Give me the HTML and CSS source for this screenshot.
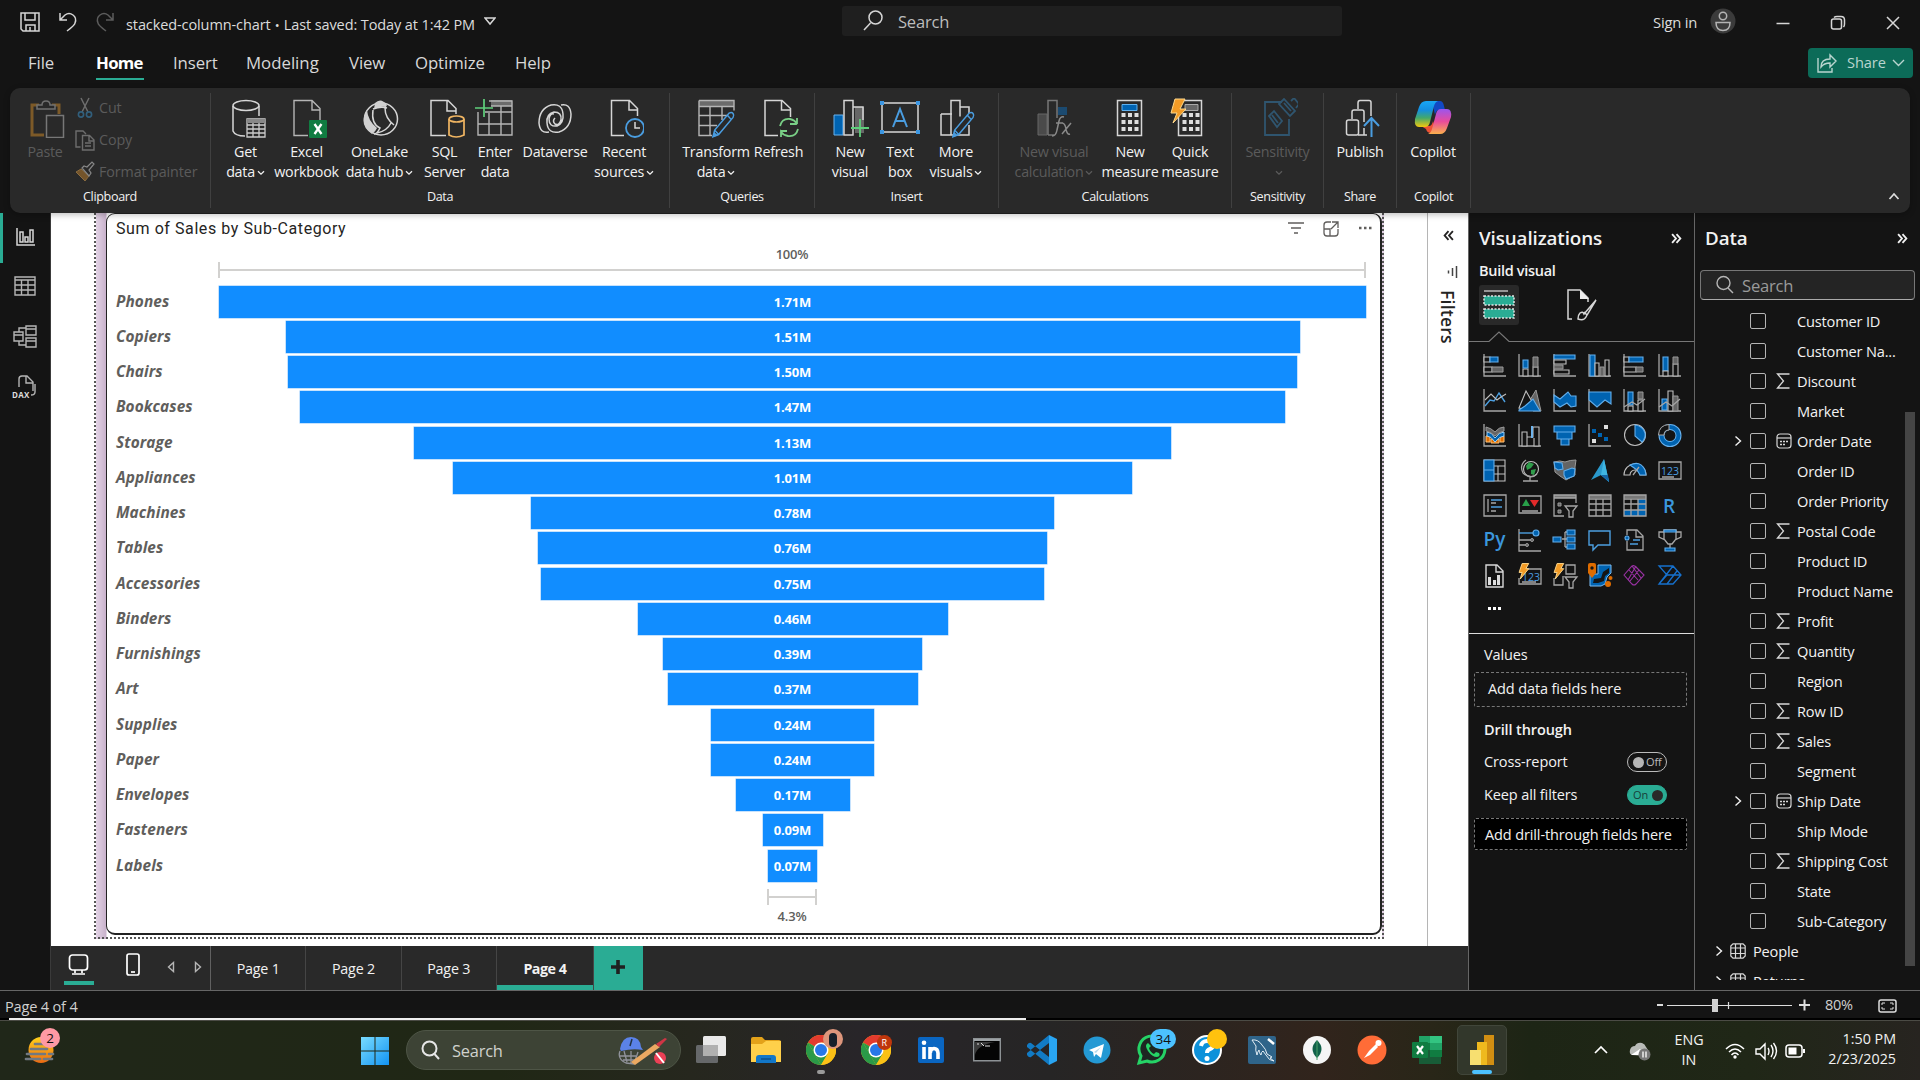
FILE: index.html
```html
<!DOCTYPE html>
<html lang="en">
<head>
<meta charset="utf-8">
<title>stacked-column-chart</title>
<link rel="stylesheet" href="styles.css">
</head>
<body>
<svg class="defs" width="0" height="0">
  <symbol id="chev" viewBox="0 0 8 6"><path d="M1 1.2l3 3 3-3" fill="none" stroke="currentColor" stroke-width="1.3"/></symbol>
  <symbol id="right" viewBox="0 0 8 12"><path d="M1.5 1.5L6.5 6l-5 4.500" fill="none" stroke="currentColor" stroke-width="1.4"/></symbol>
  <symbol id="dbl" viewBox="0 0 10 10"><path d="M1 1l3.500 4L1 9M5 1l3.500 4L5 9" fill="none" stroke="currentColor" stroke-width="1.7"/></symbol>
  <symbol id="sum" viewBox="0 0 14 16"><path d="M13.500 1H1.500l6 7-6 7h12" fill="none" stroke="#d8d8d8" stroke-width="1.3"/></symbol>
  <symbol id="cal" viewBox="0 0 16 16"><rect x="1" y="1" width="14" height="14" rx="3" fill="none" stroke="#d8d8d8" stroke-width="1.2"/><path d="M1 5h14" stroke="#d8d8d8" stroke-width="1.200"/><path d="M4 8.500h2M7 8.500h2M10 8.500h2M4 11.500h2M7 11.500h2" stroke="#d8d8d8" stroke-width="1.700"/></symbol>
  <symbol id="tbl" viewBox="0 0 16 16"><path d="M3 .8h10l2.200 2.200v10L13 15.200H3L.8 13V3zM5.500 1v14M10.500 1v14M1 5h14M1 10.500h14" fill="none" stroke="#d8d8d8" stroke-width="1.200"/></symbol>
  <symbol id="pencil" viewBox="0 0 26 32"><path d="M1.500 30.500l2-7.500L20 3.500q3-1.500 4.500.5t0 4.500L8 28zM3.500 23L8 28M18 6l4.500 5" fill="#292929" stroke="#4a9de0" stroke-width="1.700"/><path d="M1 31l2-6 4 4z" fill="#4a9de0"/></symbol>
  <symbol id="chrome" viewBox="0 0 30 30"><circle cx="15" cy="15" r="15" fill="#fbc116"/><path d="M15 15L2 7.500a15 15 0 0 1 26 0z" fill="#e33b2e"/><path d="M2 7.500L15 30A15 15 0 0 1 2 7.500z" fill="#2a9a48"/><path d="M2 7.500L8.500 19 15 30l7-11-7-4z" fill="#2a9a48"/><path d="M22 18l-7 12a15 15 0 0 0 13-22.500H15z" fill="#fbc116"/><path d="M15 7.500h13l-5 .8z" fill="#e33b2e"/><circle cx="15" cy="15" r="7.500" fill="#fff"/><circle cx="15" cy="15" r="6" fill="#2878e8"/></symbol>
  <symbol id="bolt" viewBox="0 0 12 18"><path d="M4 .5h7L8 6h3L2 17l2-7H.8z" fill="#f29b26" stroke="#ffd98c"/></symbol>
</svg>

<header class="titlebar">
  <svg class="ic-save" width="22" height="22" viewBox="0 0 22 22"><path class="lt" d="M2 2h18v18H4l-2-2zM6 2v7h10V2M7 20v-6h9v6M11 20v-4"/></svg>
  <svg class="ic-undo" width="20" height="22" viewBox="0 0 20 22"><path class="lt" d="M2 2v7h7M2 9l5-5q4-3 8 0t2 8q0 2-8 8"/></svg>
  <svg class="ic-redo" width="20" height="22" viewBox="0 0 20 22"><path class="dim" d="M18 2v7h-7M18 9l-5-5Q9 1 5 4t-2 8q0 2 8 8"/></svg>
  <span class="filename">stacked-column-chart <i>•</i> Last saved: Today at 1:42 PM</span>
  <svg class="ic-drop" width="12" height="9" viewBox="0 0 12 9"><path class="lt" d="M1 1h10L6 7z"/></svg>
  <div class="topsearch"><svg width="22" height="22" viewBox="0 0 22 22"><path class="lt" d="M2 20l6.500-7"/><circle class="lt" cx="13.500" cy="7.500" r="6.500"/></svg><span>Search</span></div>
  <span class="signin">Sign in</span>
  <svg class="avatar" width="26" height="26" viewBox="0 0 26 26"><circle cx="13" cy="13" r="12.500" fill="#3b3b3b"/><circle class="av" cx="13" cy="8" r="3.700"/><path class="av" d="M6 14.500h14q0 8-7 8t-7-8z"/></svg>
  <div class="winctl">
    <svg width="16" height="16" viewBox="0 0 16 16"><path class="lt" d="M1.500 8.500h13"/></svg>
    <svg width="16" height="16" viewBox="0 0 16 16"><rect class="lt" x="1.500" y="4" width="10" height="10" rx="2"/><path class="lt" d="M4 2.500q1-1 3-1h4q3.500 0 3.500 3.500v4q0 2-1 3"/></svg>
    <svg width="16" height="16" viewBox="0 0 16 16"><path class="lt" d="M2 2l12 12M14 2L2 14"/></svg>
  </div>
</header>

<nav class="menubar">
  <span class="m-file">File</span><span class="m-home active">Home</span><span class="m-insert">Insert</span><span class="m-model">Modeling</span><span class="m-view">View</span><span class="m-opt">Optimize</span><span class="m-help">Help</span>
  <div class="share"><svg width="20" height="20" viewBox="0 0 20 20"><path d="M1 5v14h14v-4M4 14q0-8 9-8V2l6 6-6 6v-4q-6 0-9 4z" fill="none" stroke="#b9d5cf" stroke-width="1.400"/></svg><span>Share</span><svg width="13" height="8" viewBox="0 0 13 8"><path d="M1 1l5.500 5.500L12 1" fill="none" stroke="#b9d5cf" stroke-width="1.400"/></svg></div>
</nav>

<section class="ribbon">
  <div class="group g-clip">
    <div class="tools">
      <div class="btn off b-paste"><svg width="40" height="40" viewBox="0 0 40 40"><path d="M14 7H7v30h12M27 7h7v9" fill="none" stroke="#7d5a28" stroke-width="3"/><path d="M12 11V7h5q0-4 4-4t4 4h5v4z" fill="#292929" stroke="#707070" stroke-width="1.500"/><path d="M21.500 17.500h17v22h-17z" fill="#292929" stroke="#777" stroke-width="1.500"/></svg><span>Paste</span></div>
      <div class="cliplist off">
        <div><svg width="20" height="22" viewBox="0 0 20 22"><path d="M6 1l7 14M14 1L7 15" stroke="#6d6d6d" stroke-width="1.500"/><circle cx="6" cy="17.500" r="2.600" fill="none" stroke="#315f7c" stroke-width="1.600"/><circle cx="14" cy="17.500" r="2.600" fill="none" stroke="#315f7c" stroke-width="1.600"/></svg>Cut</div>
        <div><svg width="20" height="22" viewBox="0 0 20 22"><path d="M5.500 18H1V2h7l3 3M7.500 6.500h7l4.500 4.500v10H7.500zM14 7v5h5M10 14h6M10 17h6" fill="none" stroke="#6d6d6d" stroke-width="1.400"/></svg>Copy</div>
        <div><svg width="20" height="22" viewBox="0 0 20 22"><path d="M1 11l9 9 4-5-8-7z" fill="#74542a" stroke="#8a6c40"/><path d="M7 7l7 8 2-3-2-3 5-6-2-2-5 5-3-1z" fill="#292929" stroke="#888" stroke-width="1.200"/></svg>Format painter</div>
      </div>
    </div>
    <div class="glabel">Clipboard</div>
  </div>

  <div class="group g-data">
    <div class="tools">
      <div class="btn w53"><svg width="40" height="40" viewBox="0 0 40 40"><ellipse class="lt" cx="20" cy="7.500" rx="13" ry="5"/><path class="lt" d="M7 8v25q2 5 12 5M33 8v10"/><path d="M20 20h20v20H20z" fill="#292929"/><path d="M21 21h18v18H21zM21 27h18M21 31h18M21 35h18M27 25v14M33 25v14" fill="none" stroke="#ccc" stroke-width="1.300"/><path d="M21 21h18v4H21z" fill="#888"/></svg><span>Get<br>data<svg class="cv"><use href="#chev"/></svg></span></div>
      <div class="btn w69"><svg width="40" height="40" viewBox="0 0 40 40"><path class="gr" d="M21 37.500H7v-35h18l8 8V22M25 3v9h8"/><rect x="22" y="22" width="18" height="18" rx="1" fill="#107c41"/><path d="M27.500 26l7 10M34.500 26l-7 10" stroke="#fff" stroke-width="2.300"/></svg><span>Excel<br>workbook</span></div>
      <div class="btn w77"><svg width="40" height="40" viewBox="0 0 40 40"><ellipse class="lt" cx="21" cy="21" rx="16.500" ry="16"/><path d="M7 12q-9 15 5 24 4-3 5-6Q8 23 7 12M15 5q6-6 12 2l-1 2q-6-1-12 2z" fill="#d0d0d0"/><path d="M13 14q3-3 9-3 3 11 8 15-4 6-9 5-8-6-8-17z" fill="#292929"/><path class="lt" d="M13 11q8-3 14-1M25 10q0 10 9 17M13 12q-2 14 7 18-3 6-6 6M17 35q10-2 14-10"/></svg><span>OneLake<br>data hub<svg class="cv"><use href="#chev"/></svg></span></div>
      <div class="btn w53"><svg width="40" height="40" viewBox="0 0 40 40"><path class="lt" d="M21 37.500H6v-35h17l8 8V16M22 3v10h9"/><path d="M24 21v16q7 4 15 0V21" fill="#292929" stroke="#f0b562" stroke-width="1.700"/><ellipse cx="31.500" cy="21" rx="7.500" ry="3" fill="#292929" stroke="#f0b562" stroke-width="1.700"/></svg><span>SQL<br>Server</span></div>
      <div class="btn w48"><svg width="40" height="40" viewBox="0 0 40 40"><path d="M16 2h21v6H16z" fill="#6b6b6b"/><path class="gr" d="M14 3h23v34H3V14M10 14h27M3 26h34M14 15v22M26 8v29M16 8h21"/><path d="M9 1v18M0 10h18" stroke="#5fd07b" stroke-width="1.700"/></svg><span>Enter<br>data</span></div>
      <div class="btn w72"><svg width="40" height="40" viewBox="0 0 40 40"><path class="lt" d="M26 7q9-2 10 9 0 14-12 18-11 2-12-9-1-9 7-11 8 0 7 8-2 6-6 4-3-3 0-6M14 34q-9 2-10-9Q4 11 16 7q11-2 12 9 1 9-6 12-8 1-8-7 1-6 5-5"/></svg><span>Dataverse</span></div>
      <div class="btn w66"><svg width="40" height="40" viewBox="0 0 40 40"><path class="lt" d="M20 37.500H7.500v-35h18l8 8V18M25 3v9h8"/><circle cx="31" cy="30" r="9" fill="#292929" stroke="#4a9de0" stroke-width="1.800"/><path class="lt" d="M31 24v6h5"/></svg><span>Recent<br>sources<svg class="cv"><use href="#chev"/></svg></span></div>
    </div>
    <div class="glabel">Data</div>
  </div>

  <div class="group g-query">
    <div class="tools">
      <div class="btn w68"><svg width="40" height="40" viewBox="0 0 40 40"><path d="M3 3h35v5H3z" fill="#6b6b6b"/><path class="gr" d="M3 2.500h35v10M3 2.500v35h13M3 8.500h35M3 17.500h28M3 27.500h18M14 8v29M26 8v14"/><use href="#pencil" x="14" y="12" width="26" height="28"/></svg><span>Transform<br>data<svg class="cv"><use href="#chev"/></svg></span></div>
      <div class="btn w57"><svg width="40" height="40" viewBox="0 0 40 40"><path class="lt" d="M19 37.500H6v-35h17l8.500 8V19M22.500 3v9h9"/><path d="M21 28q2-8 10-7 5 1 7 5V20M38 26h-7M39 31q-2 8-10 7-5-1-7-4v5M22 33h6" fill="none" stroke="#79cf86" stroke-width="1.800"/></svg><span>Refresh</span></div>
    </div>
    <div class="glabel">Queries</div>
  </div>

  <div class="group g-insert">
    <div class="tools">
      <div class="btn w50"><svg width="40" height="40" viewBox="0 0 40 40"><path d="M25 9h9v26h-9z" fill="#666"/><path d="M4 17h9v20H4z" fill="#0063b1" stroke="#69b3ee"/><path class="lt" d="M14 37V2.500h9V37zM23 9h10v13"/><path d="M30 21v18M21 30h18" stroke="#5fd07b" stroke-width="1.800"/></svg><span>New<br>visual</span></div>
      <div class="btn w50"><svg width="40" height="40" viewBox="0 0 40 40"><path class="lt" d="M2 5h36v29H2z"/><path d="M0 3h4v4H0zM36 3h4v4h-4zM0 32h4v4H0zM36 32h4v4h-4z" fill="#3b96e2"/><path d="M13 29l7-18 7 18M15.500 23h9" fill="none" stroke="#4a9de0" stroke-width="2"/></svg><span>Text<br>box</span></div>
      <div class="btn w62"><svg width="40" height="40" viewBox="0 0 40 40"><path class="lt" d="M5 16h11M5 16v21h28V27M15 37V2.500h9v16M24 9h9v7"/><use href="#pencil" x="14" y="12" width="26" height="28"/></svg><span>More<br>visuals<svg class="cv"><use href="#chev"/></svg></span></div>
    </div>
    <div class="glabel">Insert</div>
  </div>

  <div class="group g-calc">
    <div class="tools">
      <div class="btn off w94"><svg width="40" height="40" viewBox="0 0 40 40"><path d="M4 16h9v21H4z" fill="#4a4a4a" stroke="#666"/><path d="M24 9h9v8h-9z" fill="#1b4a70"/><path d="M14 37V2.500h9V20M14 37h6" fill="none" stroke="#777" stroke-width="1.500"/><path d="M18 38q4 0 5-6l2-9q1-5 5-4M22 25h7M28 25q3 0 4 6t4 5M37 25l-9 11" fill="none" stroke="#8a8a8a" stroke-width="1.500"/></svg><span>New visual<br>calculation<svg class="cv"><use href="#chev"/></svg></span></div>
      <div class="btn w58"><svg width="40" height="40" viewBox="0 0 40 40"><path class="lt" d="M7.500 2.500h24v35h-24z"/><path d="M12 6.500h15v6H12z" fill="#0063b1" stroke="#5fb0ee"/><path d="M11.500 17h17M11.500 24h17M11.500 31h17" stroke="#ddd" stroke-width="4" stroke-dasharray="4 2.500"/></svg><span>New<br>measure</span></div>
      <div class="btn w62"><svg width="40" height="40" viewBox="0 0 40 40"><path class="lt" d="M8.500 2.500h23v35h-23z"/><path d="M15 6.500h13v6H15z" fill="#666" stroke="#aaa"/><path d="M12.500 17h17M12.500 24h17M12.500 31h17" stroke="#ddd" stroke-width="4" stroke-dasharray="4 2.500"/><path d="M5 1h10l-5 10h6L3 25l4-10H1z" fill="#f29b26" stroke="#ffd98c"/></svg><span>Quick<br>measure</span></div>
    </div>
    <div class="glabel">Calculations</div>
  </div>

  <div class="group g-sens">
    <div class="tools"><div class="btn off w91"><svg width="40" height="40" viewBox="0 0 40 40"><path d="M24 4H7v33h24V21M11 18l5-5 8 10-5 6zM14 17l6 8M21 6l5-5 11 12-5 5zM26 5l7 8M33 3l3-3 5 6-3 4" fill="none" stroke="#2f556f" stroke-width="1.800"/></svg><span>Sensitivity<br><svg class="cv"><use href="#chev"/></svg></span></div></div>
    <div class="glabel">Sensitivity</div>
  </div>
  <div class="group g-share">
    <div class="tools"><div class="btn w72"><svg width="40" height="40" viewBox="0 0 40 40"><rect class="lt" x="6.500" y="22" width="12" height="15" rx="2"/><path class="lt" d="M12 21v-7q0-2 2-2h8q2 0 2 2v10M18 11V5q0-2.500 2-2.500h9q2 0 2 2V18M18 37h9M24 30v7"/><path d="M31.500 39V21M24 28l7.500-8 7.500 8" fill="none" stroke="#4a9de0" stroke-width="2"/></svg><span>Publish</span></div></div>
    <div class="glabel">Share</div>
  </div>
  <div class="group g-copilot">
    <div class="tools"><div class="btn w72"><svg width="40" height="40" viewBox="0 0 40 40">
      <defs><linearGradient id="ca" x2="0" y2="1"><stop stop-color="#18a7f5"/><stop offset=".35" stop-color="#148ee0"/><stop offset=".65" stop-color="#43a86b"/><stop offset="1" stop-color="#f4c80d"/></linearGradient><linearGradient id="cb" x2="0" y2="1"><stop stop-color="#9b55ee"/><stop offset=".5" stop-color="#e94b9b"/><stop offset="1" stop-color="#fbb04c"/></linearGradient></defs>
      <path d="M19 3h8q3 0 4 5l1 4h-6q-3 0-4 5z" fill="#1248c4"/><path d="M8 28h8q3 0 4-5l4 12h-6q-4 0-5-4z" fill="#ee5134"/><path d="M13 3h12q-3 1-4 5l-4 16q-1 5-5 5H6q-5 0-4-8l4-12q2-6 7-6z" fill="url(#ca)"/><path d="M27 36H15q3-1 4-5l4-15q1-5 5-5h6q5 0 4 8l-4 11q-2 6-7 6z" fill="url(#cb)"/></svg><span>Copilot</span></div></div>
    <div class="glabel">Copilot</div>
  </div>
  <svg class="collapse" width="12" height="8" viewBox="0 0 12 8"><path d="M1.500 7L6 2l4.500 5" fill="none" stroke="#ddd" stroke-width="1.700"/></svg>
</section>

<main class="work">
  <aside class="rail">
    <div class="railbtn on"><svg width="24" height="24" viewBox="0 0 24 24"><path class="lt" d="M3 3v17h18M6 7h3v10H6zM11 12h3v5h-3zM16 5h3v12h-3z"/></svg></div>
    <div class="railbtn"><svg width="24" height="24" viewBox="0 0 24 24"><path class="gr" d="M2 3h20v18H2zM2 6h20M2 11h20M2 16h20M8.500 6v15M15 6v15"/></svg></div>
    <div class="railbtn"><svg width="26" height="26" viewBox="0 0 26 26"><path class="gr" d="M2 9h9v9H2zM2 12h9M14 3h10v9H14zM14 6h10M14 15h10v9H14zM14 18h10M7 9V5h7M7 18v4h7"/></svg></div>
    <div class="railbtn"><svg width="26" height="26" viewBox="0 0 26 26"><path class="gr" d="M7 14V6q0-3 3-3h5l6 6v9M14 3v7h7M23 11v8q0 3-4 3"/></svg><b>DAX</b></div>
  </aside>

  <div class="center">
    <div class="stage">
      <div class="canvas">
        <div class="page">
          <article class="visual">
            <div class="vhead"><h2>Sum of Sales by Sub-Category</h2>
              <svg width="88" height="20" viewBox="0 0 88 20"><path d="M1 4h16M4 9h10M7 14h4M44 3h-4q-3 0-3 3v8q0 3 3 3h8q3 0 3-3v-4M45 3h6v6M51 3l-7 7M37 10h6v7" fill="none" stroke="#605e5c" stroke-width="1.300"/><path d="M72 9h2.500M77 9h2.500M82 9h2.500" stroke="#605e5c" stroke-width="2.500"/></svg></div>
            <div class="pct">100%</div>
            <div class="bracket" style="width:1148px"></div>
            <div class="funnel">
              <div class="frow"><em>Phones</em><div class="bar" style="width:1147px">1.71M</div></div>
              <div class="frow"><em>Copiers</em><div class="bar" style="width:1014px">1.51M</div></div>
              <div class="frow"><em>Chairs</em><div class="bar" style="width:1009px">1.50M</div></div>
              <div class="frow"><em>Bookcases</em><div class="bar" style="width:985px">1.47M</div></div>
              <div class="frow"><em>Storage</em><div class="bar" style="width:757px">1.13M</div></div>
              <div class="frow"><em>Appliances</em><div class="bar" style="width:679px">1.01M</div></div>
              <div class="frow"><em>Machines</em><div class="bar" style="width:523px">0.78M</div></div>
              <div class="frow"><em>Tables</em><div class="bar" style="width:509px">0.76M</div></div>
              <div class="frow"><em>Accessories</em><div class="bar" style="width:503px">0.75M</div></div>
              <div class="frow"><em>Binders</em><div class="bar" style="width:310px">0.46M</div></div>
              <div class="frow"><em>Furnishings</em><div class="bar" style="width:259px">0.39M</div></div>
              <div class="frow"><em>Art</em><div class="bar" style="width:250px">0.37M</div></div>
              <div class="frow"><em>Supplies</em><div class="bar" style="width:163px">0.24M</div></div>
              <div class="frow"><em>Paper</em><div class="bar" style="width:163px">0.24M</div></div>
              <div class="frow"><em>Envelopes</em><div class="bar" style="width:114px">0.17M</div></div>
              <div class="frow"><em>Fasteners</em><div class="bar" style="width:60px">0.09M</div></div>
              <div class="frow"><em>Labels</em><div class="bar" style="width:49px">0.07M</div></div>
            </div>
            <div class="bracket low" style="width:50px"></div>
            <div class="pct last">4.3%</div>
          </article>
        </div>
      </div>
      <aside class="filters"><svg class="flip" width="11" height="11"><use href="#dbl"/></svg><svg class="fic" width="12" height="12" viewBox="0 0 12 12"><path d="M10.500 0v12M6.500 2v8M2.500 4.500v3" stroke="#444" stroke-width="1.500"/></svg><span>Filters</span></aside>
    </div>
    <footer class="tabs">
      <div class="views">
        <div class="vw on"><svg width="24" height="26" viewBox="0 0 24 26"><rect x="2.500" y="3" width="18" height="15" rx="3" class="wh"/><path class="wh" d="M8 18v3M15 18v3M5 22h13"/></svg></div>
        <div class="ph"><svg width="16" height="26" viewBox="0 0 16 26"><rect x="2" y="2" width="12" height="21" rx="2" class="wh"/><path class="wh" d="M6 20h4"/></svg></div>
        <svg class="ar" width="8" height="12" viewBox="0 0 8 12"><path class="gr" d="M6.500 1.500v9L1.500 6z"/></svg>
        <svg class="ar" width="8" height="12" viewBox="0 0 8 12"><path class="gr" d="M1.500 1.500v9l5-4.500z"/></svg>
      </div>
      <div class="tab">Page 1</div><div class="tab">Page 2</div><div class="tab">Page 3</div><div class="tab sel">Page 4</div><div class="plus"><svg width="14" height="14" viewBox="0 0 14 14"><path d="M7 0v14M0 7h14" stroke="#202020" stroke-width="3.600"/></svg></div>
    </footer>
  </div>

  <aside class="viz">
    <div class="phead"><h3>Visualizations</h3><svg width="11" height="11"><use href="#dbl"/></svg></div>
    <div class="build">Build visual</div>
    <div class="modes">
      <div class="mode on"><svg width="40" height="40" viewBox="0 0 40 40"><path d="M5 6h24" stroke="#bbb" stroke-width="1.500"/><path d="M5 11h30v9H5zM5 24h30v9H5z" fill="#2aac94" stroke="#e4e4e4" stroke-width="1.500" stroke-dasharray="2 1.500"/></svg></div>
      <div class="mode"><svg width="34" height="34" viewBox="0 0 34 34"><path class="lt" d="M7 31H3V2h12l8 8v4"/><path d="M15 2v9h9z" fill="#eee"/><path class="lt" d="M31 12L19 26q-1-3-4-1-2 2-2 6 6 2 8-2l1-2zM19 24l3 3"/></svg></div>
    </div>
    <svg class="notch" width="225" height="12" viewBox="0 0 225 12"><path d="M0 10.500h20l10-9.500 10 9.500h185" fill="none" stroke="#777" stroke-width="1.200"/></svg>
    <div class="gallery">
      <svg><path class="ax" d="M1 0v22h22"/><path class="o" d="M1 3h6v5H1z"/><path class="b" d="M7 3h8v5H7z"/><path class="o" d="M1 13h8v5H1z"/><path class="g" d="M9 13h11v5H9z"/></svg>
      <svg><path class="ax" d="M1 0v22h22"/><path class="o" d="M5 15h5v7H5zM15 13h5v9h-5z"/><path class="b" d="M5 6h5v8H5z"/><path class="g" d="M15 3h5v10h-5z"/></svg>
      <svg><path class="ax" d="M1 0v22h22"/><path class="b" d="M1 1h21v4H1z"/><path class="o" d="M1 6h12v4H1zM1 16h15v4H1z"/><path class="g" d="M1 11h9v4H1z"/></svg>
      <svg><path class="ax" d="M1 0v22h22"/><path class="b" d="M2 1h5v21H2z"/><path class="o" d="M7 9h4v13H7zM17 6h4v16h-4z"/><path class="g" d="M12 13h4v9h-4z"/></svg>
      <svg><path class="ax" d="M1 0v22h22"/><path class="o" d="M1 3h5v5H1zM1 13h12v5H1z"/><path class="b" d="M6 3h14v5H6z"/><path class="g" d="M13 13h7v5h-7z"/></svg>
      <svg><path class="ax" d="M1 0v22h22"/><path class="b" d="M5 3h5v14H5z"/><path class="o" d="M5 17h5v5H5zM15 10h5v12h-5z"/><path class="g" d="M15 3h5v7h-5z"/></svg>

      <svg><path class="ax" d="M1 0v22h22"/><path class="bl" d="M2 17l5-6 4 1 5-8 6 9"/><path class="o n" d="M2 11l6-6 6 6 4-3 5-3"/></svg>
      <svg><path class="g" d="M12 11l6-10 5 21h-8z"/><path class="o" d="M1 19L8 2l8 14-6 5z"/><path class="b" d="M1 21l6-4 8-7 7 12H1z"/></svg>
      <svg><path class="ax" d="M1 0v22h22"/><path class="b" d="M1 6l6 4 8-7 3 4h5v10l-5 1-4-4-7 4-6-5z"/></svg>
      <svg><path class="ax" d="M1 0v22h22"/><path class="b" d="M1 3h22v12l-6-4-8 7-8-7z"/></svg>
      <svg><path class="ax" d="M1 0v22h22"/><path class="b" d="M5 3h5v13H5z"/><path class="g" d="M15 3h5v7h-5z"/><path class="o" d="M5 17h5v5H5zM15 11h5v11h-5z"/><path class="ax" d="M1 18l8-5 5 3 8-6"/></svg>
      <svg><path class="ax" d="M1 0v22h22"/><path class="b" d="M4 10h5v11H4z"/><path class="o" d="M10 2h5v20h-5z"/><path class="g" d="M15 7h5v15h-5z"/><path class="ax" d="M1 18l7-5 6 4 8-7"/></svg>

      <svg><path class="ax" d="M1 0v22h22"/><path d="M3 12h4v6H3zM8 15h8v4H8zM17 12h4v6h-4z" fill="#de6c00" stroke="#ffc378"/><path d="M4 8q5 0 8 6 4-6 9-6v4q-4 0-9 6-4-6-8-6z" fill="#0063b1" stroke="#9bd0f7"/><path class="g" d="M3 3q5 1 9 5 4-5 9-5v4q-5 1-9 5Q8 8 3 7z"/></svg>
      <svg><path class="ax" d="M1 0v22h22"/><path class="o" d="M4 8h5v14H4zM9 8v5h6V3h6v19h-5V14"/><path d="M14 2v12" stroke="#6fb5ee" stroke-width="2"/></svg>
      <svg><path class="b" d="M1 2h21v6H1zM4 8h15v7H4zM8 15h8v6H8z"/></svg>
      <svg><path class="ax" d="M1 0v22h22"/><path d="M4 5h4v4H4zM10 9h4v4h-4zM16 13h4v4h-4z" fill="#0063b1"/><path d="M16 1h4v4h-4zM4 15h4v4H4z" fill="#ddd"/></svg>
      <svg><circle class="o" cx="12" cy="11" r="10.500"/><path class="b" d="M12 1v11l7 6q4-4 3-9-2-7-10-8z"/></svg>
      <svg><circle cx="12" cy="11.500" r="8.500" fill="none" stroke="#67b2ef" stroke-width="6"/><circle cx="12" cy="11.500" r="8.500" fill="none" stroke="#0063b1" stroke-width="4"/><path d="M.5 11Q1 1 11 .5V6q-5 0-5 5z" fill="#141414" stroke="#aaa"/></svg>

      <svg><path class="o" d="M1 1h21v21H1zM15 7v15M11 7h11M11 15h11"/><path class="b" d="M1 1h10v10H1zM1 11h10v11H1z"/></svg>
      <svg><circle class="o" cx="13" cy="10" r="7.500"/><path d="M8 7l3-4 5 2-3 4-4 2zM13 11l5-1-2 6-3-1z" fill="#2f9c4a"/><path class="ax" d="M8 1Q1 6 5 14q8 7 14 1M12 18v4M5 22h15"/></svg>
      <svg><path class="g" d="M1 3q6-2 11 0 5-2 11-2l-1 7v8l-9 5-6-4-5-4z"/><path class="b" d="M1 3l8 1 1 6-5 1-3-2zM11 12l8-3 3 1-1 7-8 3-2-4z"/></svg>
      <svg class="free"><path d="M16 0L3 21l10-5 8 7z" fill="#2a99cc"/><path d="M13 16l8 7L16 0z" fill="#40b6e2"/><path d="M13 16l8 7-1-7z" fill="#1666a6"/></svg>
      <svg><path class="o" d="M1 16A11 11 0 0 1 23 16h-6a5 5 0 0 0-10 0z"/><path class="b" d="M7 6q10-5 15 5l1 5h-6l-3-5z"/><path class="ax" d="M10 16l6-8"/></svg>
      <svg><path class="ax" d="M1 3h22v17H1zM4 18h12"/><text x="12" y="15.500" class="n123">123</text></svg>

      <svg><path class="ax" d="M1 1h22v21H1z"/><path class="ax" d="M5 5v13M8 9h5M8 17h5"/><path class="bl" d="M8 6h11M8 13h11"/></svg>
      <svg><path class="ax" d="M1 2h22v17H1zM4 17h16"/><path d="M8 5l4 7H4z" fill="#28a049"/><path d="M12 6h9l-4.500 7z" fill="#e22a2a"/></svg>
      <svg><path d="M1 1h22v3H1z" fill="#777"/><path class="ax" d="M23 9V1H1v21h10M1 4h22"/><path class="g" d="M5 9h3v3H5zM5 16h3v3H5z"/><path class="ax" d="M12 12h12l-4 5v6h-4v-6z"/></svg>
      <svg><path d="M1 1h22v3H1z" fill="#777"/><path class="ax" d="M1 1h22v21H1zM1 5h22M1 10h22M1 16h22M8 5v17M15 5v17"/></svg>
      <svg><path d="M1 1h22v3H1z" fill="#777"/><path d="M15 5h8v17H1v-6h14z" fill="#0063b1"/><path class="ax" d="M1 1h22v21H1zM1 5h22M1 10h22M1 16h22M8 5v17M15 5v17"/></svg>
      <svg><text x="11" y="19" class="ltr">R</text></svg>

      <svg class="free"><text x="11.500" y="17" class="ltr">Py</text></svg>
      <svg><path class="ax" d="M1 0v22h22M1 11h12M1 16h7"/><path class="bl" d="M1 4h15"/><circle class="b" cx="18" cy="4" r="3"/><circle class="g" cx="14" cy="11" r="1.500"/><circle class="g" cx="9" cy="16" r="1.500"/></svg>
      <svg><path class="ax" d="M9 10h5M12 3v15M12 3h3M12 18h3"/><path class="b" d="M0 8h8v5H0zM14 1h8v5h-8zM14 8h8v5h-8zM14 15h8v5h-8z"/></svg>
      <svg><path class="bl" d="M1 2h21v14H10l-5 5v-5H1z"/></svg>
      <svg><path class="ax" d="M4 6V1h10l6 6v14H4v-9M13 1v7h7"/><path class="bl" d="M10 11h7M7 15h8"/><circle class="b" cx="4" cy="9" r="2"/></svg>
      <svg><path class="ax" d="M6 1h12v9l-4 5h-4l-4-5zM6 3H1v5l6 3M18 3h5v5l-6 3M12 15v4"/><path class="b" d="M6 1h12v2H6zM7 19h10v3H7z"/></svg>

      <svg class="free"><path class="doc" d="M3 1h11l6 6v16H3zM13 1v7h7"/><path d="M5 13h3v8H5zM10 16h3v5h-3zM14 11h3v10h-3z" fill="#ddd"/></svg>
      <svg class="free"><path class="ax" d="M9 5h14v15H1v-6M4 18h14"/><text x="13" y="16.500" class="n123">123</text><use href="#bolt" x="0" y="-1" width="12" height="17"/></svg>
      <svg class="free"><path class="ax" d="M13 1h9v9h-9zM1 14v7h9v-9M12 13h12l-4 5v6h-4v-6z"/><use href="#bolt" x="0" y="-1" width="12" height="17"/></svg>
      <svg class="free"><path d="M10 1h13v8l-4 4-2 7-4 2H2V10h8z" fill="#0063b1" stroke="#7abbf0"/><path d="M5 19l1-4 7-1 2-6 6-4v5l-4 3-1 5-6 2z" fill="#141414"/><path d="M0 1q0-2 2-2h4q2 0 2 2v8l-4 5-4-5z" fill="#de6c00"/><circle cx="4" cy="4" r="1.700" fill="#141414"/><circle cx="20" cy="20" r="3" fill="#de6c00"/><circle cx="22.500" cy="14" r="2" fill="#de6c00"/></svg>
      <svg><path d="M1 11l8-9q2-1 4 1l8 8-8 9q-2 2-4 0zM6 6l9 10M13 2L5 16M16 6l-9 11M9 2l9 12" fill="none" stroke="#9a32a4" stroke-width="1.100"/></svg>
      <svg><path d="M1 2h14l8 9-8 9H1l8-9zM9 11h14M15 2L1 20M19 7L9 20" fill="none" stroke="#1670cc" stroke-width="1.300"/></svg>
      <i class="more"></i>
    </div>
    <div class="wells">
      <div class="wl">Values</div>
      <div class="well">Add data fields here</div>
      <div class="wl strong">Drill through</div>
      <div class="wl tg">Cross-report<span class="toggle"><i></i>Off</span></div>
      <div class="wl tg keep">Keep all filters<span class="toggle on">On<i></i></span></div>
      <div class="well blk">Add drill-through fields here</div>
    </div>
  </aside>

  <aside class="datap">
    <div class="phead"><h3>Data</h3><svg width="11" height="11"><use href="#dbl"/></svg></div>
    <div class="dsearch"><svg width="20" height="20" viewBox="0 0 20 20"><circle class="gr" cx="8.500" cy="8" r="6.500"/><path class="gr" d="M13 13l5 5"/></svg>Search</div>
    <div class="dlist">
      <ul>
        <li><s></s><b></b><u></u>Customer ID</li>
        <li><s></s><b></b><u></u>Customer Na...</li>
        <li><s></s><b></b><u><svg width="14" height="16"><use href="#sum"/></svg></u>Discount</li>
        <li><s></s><b></b><u></u>Market</li>
        <li><s><svg width="8" height="12"><use href="#right"/></svg></s><b></b><u><svg width="16" height="16"><use href="#cal"/></svg></u>Order Date</li>
        <li><s></s><b></b><u></u>Order ID</li>
        <li><s></s><b></b><u></u>Order Priority</li>
        <li><s></s><b></b><u><svg width="14" height="16"><use href="#sum"/></svg></u>Postal Code</li>
        <li><s></s><b></b><u></u>Product ID</li>
        <li><s></s><b></b><u></u>Product Name</li>
        <li><s></s><b></b><u><svg width="14" height="16"><use href="#sum"/></svg></u>Profit</li>
        <li><s></s><b></b><u><svg width="14" height="16"><use href="#sum"/></svg></u>Quantity</li>
        <li><s></s><b></b><u></u>Region</li>
        <li><s></s><b></b><u><svg width="14" height="16"><use href="#sum"/></svg></u>Row ID</li>
        <li><s></s><b></b><u><svg width="14" height="16"><use href="#sum"/></svg></u>Sales</li>
        <li><s></s><b></b><u></u>Segment</li>
        <li><s><svg width="8" height="12"><use href="#right"/></svg></s><b></b><u><svg width="16" height="16"><use href="#cal"/></svg></u>Ship Date</li>
        <li><s></s><b></b><u></u>Ship Mode</li>
        <li><s></s><b></b><u><svg width="14" height="16"><use href="#sum"/></svg></u>Shipping Cost</li>
        <li><s></s><b></b><u></u>State</li>
        <li><s></s><b></b><u></u>Sub-Category</li>
        <li class="t"><svg width="8" height="12"><use href="#right"/></svg><svg width="16" height="16"><use href="#tbl"/></svg>People</li>
        <li class="t"><svg width="8" height="12"><use href="#right"/></svg><svg width="16" height="16"><use href="#tbl"/></svg>Returns</li>
      </ul>
      <div class="scroll"></div>
    </div>
  </aside>
</main>

<div class="status"><span>Page 4 of 4</span>
  <svg width="270" height="24" viewBox="0 0 270 24"><path d="M10 12h6M152 12h11M157.500 6.500v11" stroke="#ddd" stroke-width="2"/><path d="M20 12.500h125M81.500 9v7" stroke="#ddd" stroke-width="1.200"/><path d="M65 6h6v13h-6z" fill="#d0d0d0"/><rect x="232" y="7" width="17" height="12" rx="2" fill="none" stroke="#ddd" stroke-width="1.500"/><path d="M238 10h-3v2M235 14v2h3M243 10h3v2M246 14v2h-3" fill="none" stroke="#ddd"/><text x="178" y="17" class="zoomtxt">80%</text></svg>
</div>
<div class="progress"></div>

<footer class="taskbar">
  <div class="weather"><svg width="36" height="40" viewBox="0 0 36 40"><defs><linearGradient id="we" x2="0" y2="1"><stop stop-color="#ffd21c"/><stop offset="1" stop-color="#ec6a11"/></linearGradient></defs><ellipse cx="17" cy="25" rx="12.500" ry="13" fill="url(#we)"/><path d="M11 19h14M7 24h16M3 29h18M25 29h4M2 34h14M20 34h8" stroke="#717982" stroke-width="2.700" stroke-linecap="round"/></svg><span class="badge pink">2</span></div>
  <svg class="win" width="30" height="30" viewBox="0 0 30 30"><defs><linearGradient id="wi" x2="1" y2="1"><stop stop-color="#79dcff"/><stop offset="1" stop-color="#1293f2"/></linearGradient></defs><path d="M1 1h13.500v13.500H1zM15.500 1H29v13.500H15.500zM1 15.500h13.500V29H1zM15.500 15.500H29V29H15.500z" fill="url(#wi)"/></svg>
  <div class="tsearch"><svg width="20" height="20" viewBox="0 0 20 20"><circle cx="8.500" cy="8.500" r="7" fill="none" stroke="#e6e6e6" stroke-width="2"/><path d="M13.500 14l4.500 5" stroke="#e6e6e6" stroke-width="2"/></svg><span>Search</span>
    <svg class="cricket" width="52" height="34" viewBox="0 0 52 34"><path d="M3 18q-3 8 6 12l8 1 4-12M7 18l3 11M14 18v12M3 23h16M6 27h14" fill="none" stroke="#91939b" stroke-width="1.300"/><path d="M3 16Q5 4 14 4t10 10l2 3q-10-2-22 1z" fill="#5b82e8"/><path d="M15 6l-2 7" stroke="#234" stroke-width="1.500"/><path d="M14 29L38 11l5 3-25 18z" fill="#eba962"/><path d="M39 11L48 5l2 1-8 8z" fill="#cf3545"/><circle cx="43" cy="25" r="6" fill="#ec4056"/><path d="M39 20l8 10" stroke="#fff" stroke-width="2"/></svg></div>
  <div class="apps">
    <div><svg width="30" height="30" viewBox="0 0 30 30"><rect y="10" width="22" height="18" rx="1.500" fill="#66686a"/><rect x="7" y="1" width="23" height="20" rx="1.500" fill="#e9e9e9"/><path d="M7 10h15v11H7z" fill="#b0b0b0"/></svg></div>
    <div><svg width="30" height="30" viewBox="0 0 30 30"><path d="M0 4q0-2 2-2h9l3 3h14q2 0 2 2v18H0z" fill="#e3a21a"/><path d="M0 9h11l4-3h15v21H0z" fill="#ffd04a"/><path d="M5 28v-5q0-3 3-3h14q3 0 3 3v5z" fill="#1277c9"/><path d="M10 24h10" stroke="#0a4f8d" stroke-width="1.500"/></svg></div>
    <div><svg width="30" height="30"><use href="#chrome"/></svg><span class="face"><i></i></span><em class="run"></em></div>
    <div><svg width="30" height="30"><use href="#chrome"/></svg><span class="rb">R</span></div>
    <div><svg width="26" height="26" viewBox="0 0 26 26"><rect width="26" height="26" rx="2" fill="#0a66c2"/><path d="M6 10v12M12 22V10M12.300 16q0-4.500 3.700-4.500t4 4.500v6" fill="none" stroke="#fff" stroke-width="3.600"/><circle cx="6" cy="5.700" r="2.300" fill="#fff"/></svg></div>
    <div><svg width="28" height="24" viewBox="0 0 28 24"><path d="M.7.7h26.600v22H.7z" fill="#050505" stroke="#8d9295" stroke-width="1.500"/><path d="M1 1h26v2H1z" fill="#9da2a5"/><path d="M2 4h20Q4 7 2 17z" fill="#3b3b3b"/><path d="M4 6h2M8 5l3 3M12 8h5" stroke="#ddd"/></svg></div>
    <div><svg width="30" height="30" viewBox="0 0 30 30"><path d="M22 0l8 4v22l-8 4z" fill="#29a5f2"/><path d="M22 0v8L4 22q-2 1-4-2v-2zM22 30v-8L4 8Q2 7 0 10v2z" fill="#127bc4"/></svg></div>
    <div><svg width="28" height="28" viewBox="0 0 28 28"><circle cx="14" cy="14" r="13.500" fill="#2499d4"/><path d="M6 14l15-6-3 14-5-4-2 3-1-5z" fill="#fff"/><path d="M11 16l7-5-5 6z" fill="#b8d9eb"/></svg></div>
    <div><svg width="32" height="32" viewBox="0 0 32 32"><path d="M3 29l2-7A13 13 0 1 1 11 27z" fill="#1d2622" stroke="#25d366" stroke-width="3"/><path d="M12 9q-4 2 0 8t9 6q4-1 2-4l-3-1-2 2q-4-2-5-6l2-2z" fill="#25d366"/></svg><span class="badge blue">34</span></div>
    <div><svg width="30" height="30" viewBox="0 0 30 30"><circle cx="15" cy="15" r="14" fill="#0d91da" stroke="#fff" stroke-width="2"/><path d="M9 11q1-5 6-5t6 4q0 3-3 4t-3 4" fill="none" stroke="#fff" stroke-width="4"/><circle cx="15" cy="23.500" r="2.500" fill="#fff"/></svg><span class="dot"></span></div>
    <div><svg width="30" height="30" viewBox="0 0 30 30"><rect x="1" y="1" width="28" height="28" rx="2" fill="#2f6489"/><path d="M5 5q6-1 10 5 4 4 5 9l5 3-2 1 4 3q-5 0-8-6l-3-4q-2 1-2 4-2-2-2-5-2 3-2 5-2-5-1-9z" fill="none" stroke="#e4eef5" stroke-width="1"/><path d="M21 4l6 5" stroke="#fff" stroke-width="2.500"/></svg></div>
    <div><svg width="28" height="28" viewBox="0 0 28 28"><circle cx="14" cy="14" r="14" fill="#f5f5f5"/><path d="M14 4q9 9 0 18-9-9 0-18z" fill="#116149"/><path d="M14 5v19" stroke="#4ba36a"/></svg></div>
    <div><svg width="30" height="30" viewBox="0 0 30 30"><circle cx="15" cy="15" r="14.500" fill="#ff6c37"/><path d="M7 23l5-7 7-7 2 3-8 8z" fill="#fff"/><circle cx="21.500" cy="8" r="3" fill="#fff"/></svg></div>
    <div><svg width="30" height="28" viewBox="0 0 30 28"><path d="M7 0h22v28H7z" fill="#185c37"/><path d="M7 0h11v7H7z" fill="#21a366"/><path d="M18 0h12v7H18z" fill="#33c481"/><path d="M7 7h11v7H7z" fill="#107c41"/><path d="M18 7h12v7H18z" fill="#21a366"/><path d="M18 14h12v7H18z" fill="#107c41"/><rect y="6" width="16" height="16" rx="1" fill="#107c41"/><path d="M5 10l6 8M11 10l-6 8" stroke="#fff" stroke-width="2.200"/></svg></div>
    <div class="cur"><svg width="24" height="30" viewBox="0 0 24 30"><path d="M14 0h10v30H14z" fill="#d18e12"/><path d="M7 7h10v23H7z" fill="#efb91e"/><path d="M0 15h11v15H0z" fill="#f7df70"/></svg><em class="run big"></em></div>
  </div>
  <div class="tray">
    <svg class="t1" width="16" height="10" viewBox="0 0 16 10"><path d="M2 8l6-6 6 6" fill="none" stroke="#fff" stroke-width="1.700"/></svg>
    <svg class="t2" width="22" height="20" viewBox="0 0 22 20"><path d="M3 14q-3-1-2-5t5-4q2-4 7-3 3 1 4 4l2 3v6z" fill="#b9bbb8"/><path d="M2 14l9-6 5 6z" fill="#fff"/><circle cx="15.500" cy="13.500" r="6" fill="#777"/><path d="M14 10.500v6M17 10.500v6" stroke="#fff" stroke-width="1.300"/></svg>
    <div class="lang">ENG<br>IN</div>
    <svg class="t3" width="80" height="20" viewBox="0 0 80 20"><path d="M1 8q9-9 18 0M4 11q6-6 12 0M6.500 14q3.500-4 7 0" fill="none" stroke="#fff" stroke-width="1.500"/><circle cx="10" cy="16" r="1.700" fill="#fff"/><path d="M31 8h4l5-5v15l-5-5h-4zM43 7q2 3 0 7M46 4q4 6 0 12M48.500 2q6 8 0 16" fill="none" stroke="#fff" stroke-width="1.400"/><rect x="61" y="4" width="16" height="12" rx="3" fill="none" stroke="#fff" stroke-width="1.500"/><path d="M63.500 6.500h8v7h-8z" fill="#fff"/><path d="M79 8v4" stroke="#fff" stroke-width="2"/></svg>
    <div class="clock">1:50 PM<br>2/23/2025</div>
  </div>
</footer>
</body>
</html>
```
FILE: styles.css
```css
* { box-sizing: border-box; }
body { margin: 0; width: 1920px; height: 1080px; overflow: hidden; background: #141414; color: #f2f2f2; font-family: "Open Sans", "Noto Sans", sans-serif; font-size: 14px; letter-spacing: -0.2px; display: flex; flex-direction: column; }
svg { display: block; flex: none; }
.defs { position: absolute; }
h2, h3, ul { margin: 0; padding: 0; }
.lt { fill: none; stroke: #d6d6d6; stroke-width: 1.5; }
.gr { fill: none; stroke: #b5b5b5; stroke-width: 1.4; }
.wh { fill: none; stroke: #fff; stroke-width: 1.7; }
.doc { fill: none; stroke: #d8d8d8; stroke-width: 1.4; }
.dim { fill: none; stroke: #5c5c5c; stroke-width: 1.5; }
.av { fill: none; stroke: #b4b4b4; stroke-width: 1.5; }

/* Title bar */
.titlebar { height: 44px; display: flex; flex: none; align-items: flex-start; padding-left: 19px; }
.ic-save { margin-top: 11px; }
.ic-undo { margin: 11px 0 0 17px; }
.ic-redo { margin: 11px 0 0 17px; }
.filename { margin: 14px 0 0 11px; width: 358px; font-size: 14.5px; line-height: 22px; color: #dcdcdc; white-space: nowrap; letter-spacing: -0.1px; }
.filename i { font-style: normal; font-size: 13px; margin: 0 .5px; }
.ic-drop { margin-top: 17px; }
.topsearch { margin: 6px 0 0 346px; width: 500px; height: 30px; border-radius: 3px; background: #1f1f1f; display: flex; align-items: center; padding-left: 20px; color: #bdbdbd; font-size: 16.5px; }
.topsearch span { margin-left: 14px; }
.signin { margin: 12px 0 0 311px; width: 57px; line-height: 20px; font-size: 14.8px; color: #dcdcdc; white-space: nowrap; }
.avatar { margin-top: 8px; }
.winctl { display: flex; gap: 39px; margin: 15px 0 0 39px; }

/* Menu */
.menubar { height: 44px; flex: none; display: flex; font-size: 16.8px; line-height: 37px; color: #d8d8d8; padding-left: 28px; letter-spacing: -0.1px; }
.menubar > span { white-space: nowrap; }
.m-file { width: 68px; }
.m-home { width: 48px; }
.m-insert { width: 73px; margin-left: 29px; }
.m-model { width: 103px; letter-spacing: 0; }
.m-view { width: 66px; }
.m-opt { width: 100px; }
.m-help { width: 60px; }
.menubar .active { height: 36px; line-height: 37px; font-weight: 700; color: #fff; border-bottom: 2px solid #2aac94; letter-spacing: -0.7px; }
.share { flex: none; width: 105px; height: 30px; margin: 4px 7px 0 auto; background: #0c6b58; border-radius: 4px; display: flex; align-items: center; padding-left: 9px; color: #b9d5cf; font-size: 14.6px; line-height: 20px; }
.share span { margin: -2px 6px 0 10px; }

/* Ribbon */
.ribbon { flex: none; width: 1900px; height: 125px; margin-left: 10px; background: #292929; border-radius: 10px; display: flex; padding: 5px 0; position: relative; z-index: 2; box-shadow: 0 2px 6px rgba(0,0,0,.25); }
.group { border-right: 1px solid #404040; height: 115px; display: flex; flex-direction: column; flex: none; }
.g-clip { width: 201px; }
.g-data { width: 459px; }
.g-query { width: 145px; }
.g-insert { width: 184px; }
.g-calc { width: 233px; }
.g-sens { width: 92px; }
.g-share { width: 73px; }
.g-copilot { width: 74px; }
.tools { display: flex; height: 94px; padding-top: 5px; }
.g-data .tools { padding-left: 8px; }
.g-query .tools { padding-left: 12px; }
.g-insert .tools { padding-left: 10px; }
.g-calc .tools { padding-left: 8px; }
.glabel { text-align: center; font-size: 12.6px; line-height: 20px; letter-spacing: -0.35px; }
.btn { display: flex; flex-direction: column; align-items: center; flex: none; font-size: 14.3px; line-height: 20px; text-align: center; white-space: nowrap; letter-spacing: -0.25px; }
.btn > svg { margin-bottom: 4px; }
.w48 { width: 48px; }
.w50 { width: 50px; }
.w53 { width: 53px; }
.w57 { width: 57px; }
.w58 { width: 58px; }
.w62 { width: 62px; }
.w66 { width: 66px; }
.w68 { width: 68px; }
.w69 { width: 69px; }
.w72 { width: 72px; }
.w77 { width: 77px; }
.w91 { width: 91px; }
.w94 { width: 94px; }
.cv { width: 8px; height: 6px; display: inline-block; margin-left: 2px; vertical-align: 1px; }
.off { color: #5b5b5b; }
.b-paste { width: 50px; margin-left: 10px; }
.cliplist { font-size: 14.3px; margin-left: 5px; margin-top: -2px; }
.cliplist div { display: flex; gap: 4px; align-items: center; height: 32.5px; white-space: nowrap; margin-top: -.5px; letter-spacing: -0.1px; padding-bottom: 8px; }
.collapse { margin: 99px 0 0 417px; }

/* Left rail and report canvas */
.work { flex: none; height: 778px; display: flex; border-bottom: 1px solid #666; }
.rail { width: 51px; border-right: 1px solid #3a3a3a; flex: none; }
.railbtn { height: 50px; display: flex; align-items: center; justify-content: center; position: relative; padding-bottom: 5px; }
.railbtn.on { border-left: 3px solid #2aac94; padding: 0 1px 2px 0; }
.railbtn b { position: absolute; left: 12px; bottom: 14px; font-size: 8px; line-height: 9px; background: #141414; letter-spacing: .3px; color: #ddd; }
.center { width: 1417px; flex: none; }
.stage { height: 733px; display: flex; background: #fff; color: #252423; }
.canvas { width: 1376px; padding-left: 43px; }
.page { width: 1290px; height: 726px; border: 2px dotted #555; border-top: 0; padding-left: 10px; background: linear-gradient(90deg, #e2d3e5, #c9b2cc 10px, #fff 11px); }
.visual { width: 1276px; height: 722px; background: #fff; border: solid #222; border-width: 1px 2px 2px 1px; border-radius: 9px; padding-left: 9px; }
.vhead { display: flex; justify-content: space-between; padding: 3px 5px 0 0; height: 28px; }
.vhead h2 { font: 400 16px/24px Roboto, sans-serif; letter-spacing: 0.58px; }
.vhead svg { margin-top: 2px; }
.pct { width: 60px; margin: 4px 0 0 646px; text-align: center; font-size: 13px; line-height: 16px; color: #605e5c; font-weight: 600; }
.bracket { height: 16px; margin: 0 0 0 102px; border: 2px solid #c8c6c4; border-width: 0 2px; background: linear-gradient(#c8c6c4, #c8c6c4) 0 7px / 100% 2px no-repeat; opacity: .8; }
.funnel { margin-top: 6px; height: 599.3px; }
.frow { height: 35.25px; display: flex; align-items: center; padding-right: 14px; }
.frow em { width: 103px; font-size: 15.4px; font-weight: 700; color: #605e5c; white-space: nowrap; flex: none; letter-spacing: 0.08px; padding-bottom: 1px; }
.bar { height: 32px; background: #118dff; box-shadow: 0 0 0 .5px #8dc5fb; margin: 0 auto; color: #fff; font-weight: 700; font-size: 13px; display: flex; align-items: center; justify-content: center; }
.low { margin: 6px 0 0 651px; }
.last { margin-top: 3px; }
.filters { width: 41px; border-left: 1px solid #b5b5b5; display: flex; flex-direction: column; align-items: center; padding-top: 17px; }
.flip { transform: scaleX(-1); }
.fic { margin: 25px 0 0 8px; }
.filters span { writing-mode: vertical-rl; font-size: 17.6px; font-weight: 600; margin-top: 12px; line-height: 20px; letter-spacing: .2px; }

/* Page tabs */
.tabs { height: 44px; background: #292929; display: flex; }
.views { width: 160px; border-right: 1px solid #606060; display: flex; }
.vw { width: 30px; margin-left: 13px; height: 39px; border-bottom: 4px solid #2aac94; padding: 6px 0 0 3px; }
.ph { margin: 6px 0 0 31px; }
.ar { margin: 15px 0 0 26px; }
.ar + .ar { margin-left: 19px; }
.tab { width: 95.3px; border-right: 1px solid #454545; text-align: center; font-size: 14.3px; line-height: 45px; }
.tab.sel { font-weight: 700; width: 97px; box-shadow: inset 0 -5px #2aac94; letter-spacing: -0.5px; }
.plus { width: 49px; background: #2aac94; display: flex; justify-content: center; padding-top: 14px; }

/* Visualizations pane */
.viz { width: 227px; border-left: 1px solid #666; border-right: 1px solid #666; flex: none; }
.phead { display: flex; align-items: center; justify-content: space-between; padding: 0 12px 0 10px; height: 50px; }
.phead h3 { font-size: 18.8px; font-weight: 600; letter-spacing: -0.1px; line-height: 24px; }
.build { margin: -2px 0 0 10px; line-height: 20px; font-weight: 600; font-size: 14.5px; letter-spacing: -0.3px; }
.modes { display: flex; padding-left: 10px; margin-top: 4px; gap: 46px; height: 40px; }
.mode { width: 40px; height: 40px; }
.mode.on { background: #292929; border-radius: 3px; }
.mode:last-child { padding-top: 3px; }
.notch { margin-top: 6px; }
.gallery { display: grid; grid-template-columns: repeat(6, 35.1px); grid-auto-rows: 35px; padding: 11px 0 0 14px; height: 291px; border-bottom: 1px solid #ddd; }
.gallery svg { width: 24px; height: 24px; overflow: visible; }
.ax { fill: none; stroke: #a6a6a6; stroke-width: 1.3; }
.o { fill: #141414; stroke: #c0c0c0; stroke-width: 1.1; }
.n { fill: none; }
.b { fill: #0063b1; stroke: #62aeeb; stroke-width: 1.1; }
.g { fill: #646464; stroke: #9a9a9a; stroke-width: 1; }
.bl { fill: none; stroke: #4c9fe0; stroke-width: 1.4; }
.n123 { font-size: 10.5px; fill: #4a9de0; text-anchor: middle; letter-spacing: 0; }
.ltr { font-size: 19px; fill: #3b96dc; text-anchor: middle; letter-spacing: 0; font-weight: 600; }
.more { width: 3px; height: 3px; background: #fff; box-shadow: 5px 0 #fff, 10px 0 #fff; margin: 8px 0 0 5px; }
.wells { padding: 11px 7px 0 5px; font-size: 14.5px; line-height: 20px; letter-spacing: -0.12px; }
.wl { padding-left: 10px; }
.well { border: 1px dashed #777; height: 35px; margin-top: 7px; line-height: 32px; padding-left: 13px; border-radius: 2px; }
.strong { font-weight: 600; margin-top: 13px; }
.tg { display: flex; justify-content: space-between; padding-right: 20px; margin-top: 12px; }
.keep { margin-top: 13px; }
.toggle { width: 40px; height: 20px; border: 1px solid #bbb; border-radius: 10px; display: flex; align-items: center; font-size: 11px; gap: 2px; padding-left: 5px; color: #bbb; line-height: 16px; }
.toggle i { width: 11px; height: 11px; border-radius: 50%; background: #b5b5b5; }
.toggle.on { background: #2aac94; border-color: #2aac94; color: #173f39; gap: 4px; }
.toggle.on i { background: #292929; }
.blk { background: #000; height: 32px; margin-top: 13px; padding-left: 10px; line-height: 31px; }

/* Data pane */
.datap { width: 225px; flex: none; }
.dsearch { margin: 7px 5px 0; height: 30px; border: 1px solid #777; border-bottom-color: #aaa; border-radius: 4px; background: #242424; display: flex; align-items: center; gap: 7px; padding-left: 14px; font-size: 16.6px; color: #9a9a9a; }
.dlist { height: 680px; overflow: hidden; display: flex; justify-content: space-between; padding: 6px 5px 0 0; }
.dlist ul { list-style: none; }
.dlist li { height: 30px; display: flex; align-items: center; white-space: nowrap; font-size: 14.6px; letter-spacing: -0.18px; }
.dlist s { width: 55px; padding-left: 39px; text-decoration: none; flex: none; }
.dlist b { width: 16px; height: 16px; border: 1px solid #b5b5b5; border-radius: 2px; flex: none; }
.dlist u { width: 31px; padding-left: 10px; text-decoration: none; flex: none; }
.dlist .t { padding-left: 20px; gap: 7px; }
.scroll { width: 10px; height: 554px; margin-top: 106px; background: #454545; }

/* Status bar */
.status { height: 27px; flex: none; display: flex; justify-content: space-between; align-items: center; padding: 2px 0 0 5px; color: #d0d0d0; font-size: 14.6px; }
.status svg { margin: -2px 3px 0 0; }
.zoomtxt { font-size: 14.5px; fill: #d0d0d0; letter-spacing: -.3px; }
.progress { height: 2px; flex: none; background: linear-gradient(90deg, #000 9px, #eee 9px, #eee 1026px, #000 1026px); }

/* Taskbar */
.taskbar { flex: none; height: 60px; border-top: 1px solid #4b4b45; display: flex; background: linear-gradient(90deg, #202719 0, #202715 500px, #26271e 690px, #282529 860px, #262525 1050px, #31241c 1320px, #292618 1430px, #1d2515 1530px, #202717 1750px, #272420 1920px); }
.weather { width: 64px; padding: 4px 0 0 24px; position: relative; }
.badge { position: absolute; display: flex; align-items: center; justify-content: center; color: #111; font-size: 13.5px; height: 20px; border-radius: 10px; letter-spacing: 0; }
.pink { left: 40px; top: 7px; width: 20px; background: #ff99a4; }
.blue { left: 26px; top: 8px; width: 26px; background: #4cc2ff; }
.win { margin: 15px 0 0 296px; }
.tsearch { margin: 9px 0 0 16px; width: 275px; height: 40px; border-radius: 20px; background: #3d4335; border: 1px solid #4e5546; display: flex; align-items: center; padding-left: 14px; font-size: 16.4px; color: #d0d2cd; flex: none; }
.tsearch span { margin-left: 11px; width: 165px; }
.apps { display: flex; margin-left: 2.5px; }
.apps > div { width: 55.1px; height: 58px; display: flex; align-items: center; justify-content: center; position: relative; }
.face { position: absolute; right: 6px; top: 8px; width: 20px; height: 20px; border-radius: 50%; background: #dd967c; }
.face i { position: absolute; left: 6px; top: 4px; width: 8px; height: 14px; border-radius: 4px; background: #17202a; }
.rb { position: absolute; left: 28px; top: 14px; width: 15px; height: 15px; border-radius: 50%; background: #bf360c; color: #fff; font-size: 9px; line-height: 15px; text-align: center; }
.dot { position: absolute; left: 28px; top: 8px; width: 20px; height: 20px; border-radius: 50%; background: #ffc20e; }
.run { position: absolute; bottom: 5px; width: 8px; height: 4px; border-radius: 2px; background: #9a9a9a; }
.run.big { width: 20px; bottom: 0; background: #4cc2ff; }
.apps > .cur { width: 50px; height: 50px; margin: 4px 0 0 2px; border-radius: 5px; background: #32372b; border: 1px solid #41463a; }
.tray { display: flex; flex: 1; font-size: 14.3px; line-height: 20px; padding-right: 24px; justify-content: flex-end; letter-spacing: 0; }
.t1 { margin: 24px 20px 0 0; }
.t2 { margin: 20px 22px 0 0; }
.lang { text-align: center; padding-top: 9px; width: 32px; margin-right: 20px; }
.t3 { margin: 20px 0 0; }
.clock { text-align: right; width: 91px; padding-top: 8px; letter-spacing: 0; white-space: nowrap; }
```
